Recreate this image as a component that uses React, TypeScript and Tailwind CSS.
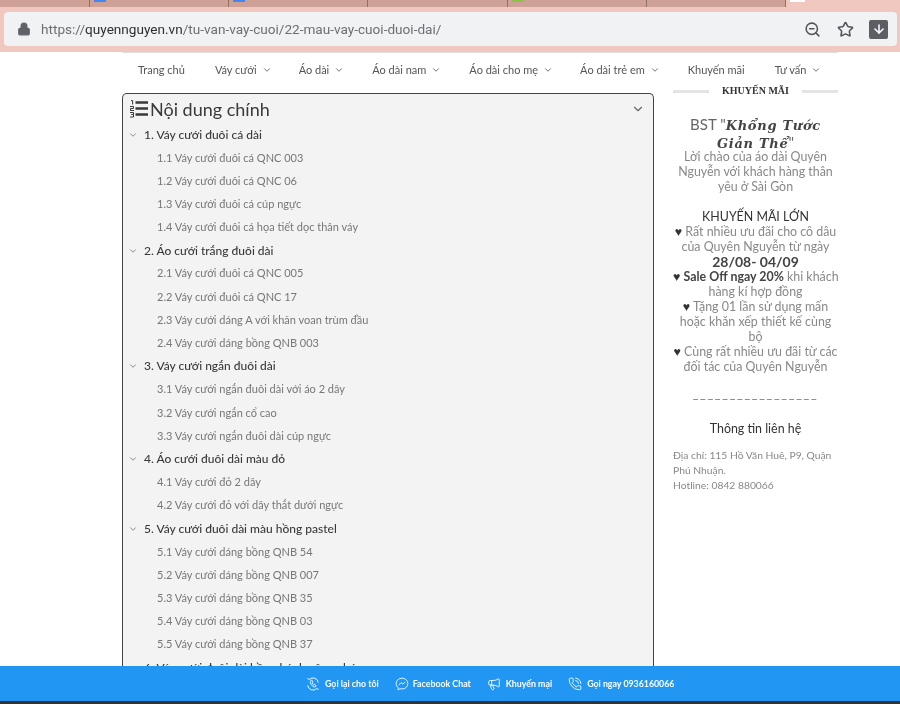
import { ArrowDown, ChevronDown, Lock, Megaphone, PhoneCall, Star, ZoomOut } from 'lucide-react';

const navItems = [
  { label: 'Trang chủ', arrow: false, gap: 'mr-[30px]' },
  { label: 'Váy cưới', arrow: true, gap: 'mr-[27px]' },
  { label: 'Áo dài', arrow: true, gap: 'mr-[28px]' },
  { label: 'Áo dài nam', arrow: true, gap: 'mr-[28px]' },
  { label: 'Áo dài cho mẹ', arrow: true, gap: 'mr-[27px]' },
  { label: 'Áo dài trẻ em', arrow: true, gap: 'mr-[28px]' },
  { label: 'Khuyến mãi', arrow: false, gap: 'mr-[30px]' },
  { label: 'Tư vấn', arrow: true, gap: '' },
];

const toc = [
  {
    title: '1. Váy cưới đuôi cá dài',
    items: [
      '1.1 Váy cưới đuôi cá QNC 003',
      '1.2 Váy cưới đuôi cá QNC 06',
      '1.3 Váy cưới đuôi cá cúp ngực',
      '1.4 Váy cưới đuôi cá họa tiết dọc thân váy',
    ],
  },
  {
    title: '2. Áo cưới trắng đuôi dài',
    items: [
      '2.1 Váy cưới đuôi cá QNC 005',
      '2.2 Váy cưới đuôi cá QNC 17',
      '2.3 Váy cưới dáng A với khăn voan trùm đầu',
      '2.4 Váy cưới dáng bồng QNB 003',
    ],
  },
  {
    title: '3. Váy cưới ngắn đuôi dài',
    items: [
      '3.1 Váy cưới ngắn đuôi dài với áo 2 dây',
      '3.2 Váy cưới ngắn cổ cao',
      '3.3 Váy cưới ngắn đuôi dài cúp ngực',
    ],
  },
  {
    title: '4. Áo cưới đuôi dài màu đỏ',
    items: ['4.1 Váy cưới đỏ 2 dây', '4.2 Váy cưới đỏ với dây thắt dưới ngực'],
  },
  {
    title: '5. Váy cưới đuôi dài màu hồng pastel',
    items: [
      '5.1 Váy cưới dáng bồng QNB 54',
      '5.2 Váy cưới dáng bồng QNB 007',
      '5.3 Váy cưới dáng bồng QNB 35',
      '5.4 Váy cưới dáng bồng QNB 03',
      '5.5 Váy cưới dáng bồng QNB 37',
    ],
  },
  { title: '6. Váy cưới đuôi dài hồng bánh công chúa', items: [] },
];

function NumberedListIcon() {
  return (
    <svg width="20" height="20" viewBox="0 0 20 20" className="shrink-0">
      <path d="M6.5 3.5h12.5M6.5 9.5h12.5M6.5 15.5h12.5" stroke="#3a3a3a" strokeWidth="2.4" />
      <path d="M2 1.5h1.6v4M1 7.5h3.5v2h-3v2h3.5M1 13.5h3.5v2h-2 2v2.500h-3.500" stroke="#3a3a3a" strokeWidth="1" fill="none" />
    </svg>
  );
}

function CallbackIcon() {
  return (
    <svg width="14" height="14" viewBox="0 0 24 24" fill="none" stroke="currentColor" strokeWidth="1.6" strokeLinecap="round">
      <path d="M3 15a9 9 0 0 0 15 5l3 1M21 9a9 9 0 0 0-15-5L3 3" />
      <path d="M8 7c-1 1-1 3 1 6s5 4.500 6.500 4l2-2-3-2.500-1.500 1c-1-.5-2-2-2.500-3.500L11.500 8 10 5.500z" />
    </svg>
  );
}

function MessengerIcon() {
  return (
    <svg width="14" height="14" viewBox="0 0 24 24" fill="none" stroke="currentColor" strokeWidth="1.5" strokeLinejoin="round">
      <path d="M12 2C6.200 2 2 6.100 2 11.300c0 2.900 1.300 5.200 3.300 6.900V22l3.400-1.900c1 .3 2.100.5 3.300.5 5.800 0 10-4.100 10-9.300S17.800 2 12 2z" />
      <path d="M6.500 14l4-4.500 2.800 2.500 4.200-3" />
    </svg>
  );
}

function Heart() {
  return <span className="text-[#333]">♥ </span>;
}

export default function App() {
  return (
    <div className="flex h-[704px] w-[900px] flex-col overflow-hidden bg-white font-['Lato','Noto_Sans',sans-serif] blur-[0.4px]">
      {/* browser chrome */}
      <div className="flex h-[52px] shrink-0 flex-col bg-[#f0c8c0]">
        <div className="flex h-[7px] shrink-0">
          <div className="flex w-[786px] bg-[#cda196]">
            <div className="h-full w-[90px] border-r border-[#8f7068]" />
            {['bg-[#4285f4]', 'bg-[#4285f4]', '', 'bg-[#8bc34a]', ''].map((fav, i) => (
              <div key={i} className="h-full w-[139.500px] border-r border-[#8f7068] pl-[4px]">
                {fav && <div className={`h-[2px] w-[12px] ${fav}`} />}
              </div>
            ))}
          </div>
          <div className="ml-[4px] h-[2px] w-[15px] bg-white" />
        </div>
        <div className="ml-[4px] mr-[3px] mt-[5px] flex h-[34px] items-center rounded-[4px] bg-[#f0f2f4] pl-[13px] pr-[9px]">
          <Lock size={14} fill="#5f6368" stroke="#5f6368" className="mr-[10px] shrink-0" />
          <div className="flex-1 font-['Roboto',sans-serif] text-[13.600px] text-[#6b7074]">
            https://<span className="text-[#2b2f33]">quyennguyen.vn</span>/tu-van-vay-cuoi/22-mau-vay-cuoi-duoi-dai/
          </div>
          <ZoomOut size={17} stroke="#50555a" strokeWidth={2.2} className="mr-[16px]" />
          <Star size={17} stroke="#50555a" strokeWidth={2.2} className="mr-[15px]" />
          <div className="flex h-[19px] w-[19px] items-center justify-center rounded-[2px] bg-[#5b5f64]">
            <ArrowDown size={14} stroke="white" strokeWidth={2.6} />
          </div>
        </div>
      </div>

      {/* page */}
      <div className="min-h-0 flex-1 overflow-hidden">
        <div className="ml-[122px] w-[716px] border-t border-[#e4dcda]">
          <nav className="flex h-[34px] items-center pl-[16px] text-[11px] text-[#555]">
            {navItems.map((item) => (
              <div key={item.label} className={`flex items-center whitespace-nowrap ${item.gap}`}>
                {item.label}
                {item.arrow && <ChevronDown size={10} strokeWidth={2} className="ml-[5px]" />}
              </div>
            ))}
          </nav>

          <div className="mt-[6px] flex items-start">
            {/* table of contents */}
            <div className="relative w-[532px] shrink-0 rounded-t-[5px] border border-b-0 border-[#444] bg-[#f3f3f3] pb-[20px] pl-[5px]">
              <div className="flex h-[29px] items-center pt-[1px] pl-[1px]">
                <NumberedListIcon />
                <span className="ml-[1px] text-[18px] text-[#3a3a3a]">Nội dung chính</span>
              </div>
              <ChevronDown size={14} stroke="#666" className="absolute right-[8px] top-[8px]" />
              {toc.map((section) => (
                <div key={section.title}>
                  <div className="flex h-[23.200px] items-center text-[12px] font-medium text-[#3a3a3a]">
                    <ChevronDown size={10} stroke="#777" className="mr-[6px] shrink-0" />
                    {section.title}
                  </div>
                  {section.items.map((item) => (
                    <div key={item} className="flex h-[23.200px] items-center pl-[29px] text-[11px] text-[#777]">
                      {item}
                    </div>
                  ))}
                </div>
              ))}
            </div>

            {/* sidebar */}
            <aside className="-mt-[7px] ml-[19px] w-[165px] shrink-0 whitespace-nowrap text-center text-[12.400px] leading-[15px] text-[#888]">
              <div className="flex items-center justify-between font-['Liberation_Serif',serif] text-[10px] font-bold leading-[10px] text-[#333]">
                <div className="h-[3px] w-[36px] bg-[#e4e4e4]" />
                KHUYẾN MÃI
                <div className="h-[3px] w-[36px] bg-[#e4e4e4]" />
              </div>
              <div className="mt-[19px] text-[15px] leading-[18px] text-[#666]">
                BST "<span className="font-['DejaVu_Serif',serif] text-[13px] font-bold italic leading-none tracking-[0.7px] text-[#444]">Khổng Tước<br />Giản Thể</span>"
              </div>
              <div className="-mt-[2px]">
                Lời chào của áo dài Quyên
                <br />
                Nguyễn với khách hàng thân
                <br />
                yêu ở Sài Gòn
              </div>
              <div className="mt-[15px] text-[#333]">KHUYẾN MÃI LỚN</div>
              <div>
                <Heart />Rất nhiều ưu đãi cho cô dâu
                <br />
                của Quyên Nguyễn từ ngày
              </div>
              <div className="text-[14px] font-bold text-[#444]">28/08- 04/09</div>
              <div>
                <Heart /><span className="font-bold text-[#444]">Sale Off ngay 20%</span> khi khách
                <br />
                hàng kí hợp đồng
              </div>
              <div>
                <Heart />Tặng 01 lần sử dụng mấn
                <br />
                hoặc khăn xếp thiết kế cùng
                <br />
                bộ
              </div>
              <div>
                <Heart />Cùng rất nhiều ưu đãi từ các
                <br />
                đối tác của Quyên Nguyễn
              </div>
              <div className="mt-[12px] tracking-[1.700px] text-[#777]">_________________</div>
              <div className="mt-[20px] text-[#333]">Thông tin liên hệ</div>
              <div className="mt-[12px] text-left text-[10.300px] text-[#888]">
                Địa chỉ: 115 Hồ Văn Huê, P9, Quận
                <br />
                Phú Nhuận.
                <br />
                Hotline: 0842 880066
              </div>
            </aside>
          </div>
        </div>
      </div>

      {/* bottom bar */}
      <div className="flex h-[35px] shrink-0 items-center bg-[#2196f3] pl-[306px] text-[8.800px] font-bold text-white">
        <CallbackIcon />
        <span className="ml-[5px] mr-[16px]">Gọi lại cho tôi</span>
        <MessengerIcon />
        <span className="ml-[4px] mr-[16px]">Facebook Chat</span>
        <Megaphone size={14} strokeWidth={1.5} />
        <span className="ml-[5px] mr-[16px]">Khuyến mại</span>
        <PhoneCall size={14} strokeWidth={1.5} />
        <span className="ml-[5px]">Gọi ngay 0936160066</span>
      </div>
      <div className="h-[3px] shrink-0 bg-[#333]" />
    </div>
  );
}
